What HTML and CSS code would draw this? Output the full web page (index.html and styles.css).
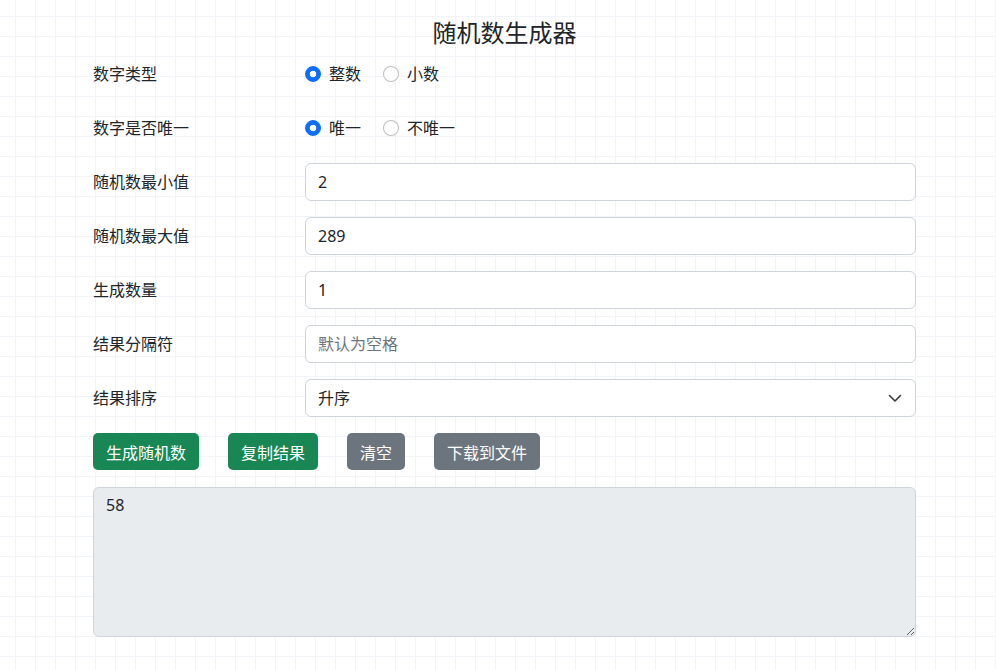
FILE: index.html
```html
<!DOCTYPE html>
<html lang="zh-CN">
<head>
  <meta charset="UTF-8">
  <meta name="viewport" content="width=device-width, initial-scale=1.0">
  <title>随机数生成器</title>
  <link rel="stylesheet" href="styles.css">
</head>
<body>

<div class="container">
  <h4 class="title">随机数生成器</h4>

  <div class="form-row">
    <label class="row-label">数字类型</label>
    <div class="check-group">
      <label class="check"><input type="radio" name="numType" checked> 整数</label>
      <label class="check"><input type="radio" name="numType"> 小数</label>
    </div>
  </div>

  <div class="form-row">
    <label class="row-label">数字是否唯一</label>
    <div class="check-group">
      <label class="check"><input type="radio" name="unique" checked> 唯一</label>
      <label class="check"><input type="radio" name="unique"> 不唯一</label>
    </div>
  </div>

  <div class="form-row">
    <label class="row-label" for="minVal">随机数最小值</label>
    <input class="field" type="text" id="minVal" value="2">
  </div>

  <div class="form-row">
    <label class="row-label" for="maxVal">随机数最大值</label>
    <input class="field" type="text" id="maxVal" value="289">
  </div>

  <div class="form-row">
    <label class="row-label" for="count">生成数量</label>
    <input class="field" type="text" id="count" value="1">
  </div>

  <div class="form-row">
    <label class="row-label" for="separator">结果分隔符</label>
    <input class="field" type="text" id="separator" placeholder="默认为空格">
  </div>

  <div class="form-row">
    <label class="row-label" for="sortOrder">结果排序</label>
    <div class="select-wrap">
      <select class="field" id="sortOrder">
        <option>升序</option>
        <option>降序</option>
        <option>不排序</option>
      </select>
      <svg class="select-arrow" width="16" height="16" viewBox="0 0 16 16">
        <path d="M2.5 5.5L8 11l5.5-5.5" fill="none" stroke="#343a40" stroke-width="1.6" stroke-linecap="round" stroke-linejoin="round"/>
      </svg>
    </div>
  </div>

  <div class="actions">
    <button class="btn btn-green">生成随机数</button>
    <button class="btn btn-green">复制结果</button>
    <button class="btn btn-gray">清空</button>
    <button class="btn btn-gray">下载到文件</button>
  </div>

  <textarea class="result" readonly>58</textarea>
</div>

</body>
</html>
```

FILE: styles.css
```css
html {
  background-color: #fff;
  background-image:
    linear-gradient(to right, #f1f4f8 1px, transparent 1px),
    linear-gradient(to bottom, #f1f4f8 1px, transparent 1px);
  background-size: 20px 20px;
  background-position: 15px 16px;
}
body {
  margin: 0;
  font-family: "Noto Sans", "Noto Sans CJK SC", sans-serif;
  font-size: 16px;
  color: #212529;
}
.container {
  margin: 0 80px 0 93px;
  padding-top: 18px;
}
.title {
  margin: 0 0 8px;
  font-size: 24px;
  font-weight: 400;
  line-height: 29px;
  text-align: center;
}
.form-row {
  display: grid;
  grid-template-columns: 212px 1fr;
  align-items: center;
  min-height: 38px;
  margin-bottom: 16px;
}
.row-label {
  line-height: 24px;
}
.check-group {
  display: flex;
  gap: 22px;
}
.check {
  display: flex;
  align-items: center;
  gap: 8px;
  line-height: 24px;
}
.check input {
  appearance: none;
  width: 16px;
  height: 16px;
  margin: 0;
  border: 1px solid rgba(0, 0, 0, 0.25);
  border-radius: 50%;
  background: #fff;
}
.check input:checked {
  border-color: #0d6efd;
  background: radial-gradient(circle, #fff 3px, #0d6efd 3.6px);
}
.field {
  box-sizing: border-box;
  width: 100%;
  height: 38px;
  padding: 6px 12px;
  font: inherit;
  color: #212529;
  background: #fff;
  border: 1px solid #ced4da;
  border-radius: 6px;
}
.field::placeholder {
  color: #6c757d;
}
.select-wrap {
  position: relative;
}
select.field {
  appearance: none;
  padding-right: 36px;
}
.select-arrow {
  position: absolute;
  right: 13px;
  top: 11px;
  pointer-events: none;
}
.actions {
  display: flex;
  gap: 29px;
  margin-bottom: 17px;
}
.btn {
  height: 37px;
  padding: 0 12px;
  font: inherit;
  color: #fff;
  border: 1px solid transparent;
  border-radius: 5px;
  cursor: pointer;
}
.btn-green {
  background-color: #198754;
}
.btn-green:hover {
  background-color: #157347;
}
.btn-gray {
  background-color: #6c757d;
}
.btn-gray:hover {
  background-color: #5c636a;
}
.result {
  display: block;
  box-sizing: border-box;
  width: 100%;
  height: 150px;
  padding: 6px 12px;
  font: inherit;
  color: #212529;
  background: #e9ecef;
  border: 1px solid #ced4da;
  border-radius: 6px;
}
```
